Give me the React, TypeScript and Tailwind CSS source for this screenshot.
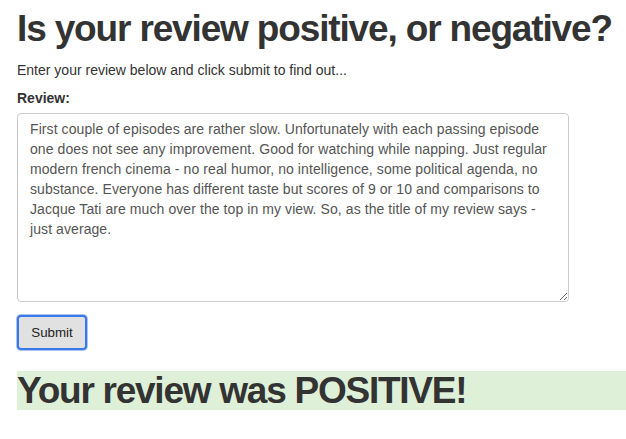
import React from "react";

const review =
  "First couple of episodes are rather slow. Unfortunately with each passing episode one does not see any improvement. Good for watching while napping. Just regular modern french cinema - no real humor, no intelligence, some political agenda, no substance. Everyone has different taste but scores of 9 or 10 and comparisons to Jacque Tati are much over the top in my view. So, as the title of my review says - just average.";

export default function App() {
  return (
    <div className="min-h-[439px] bg-white text-[#333333] font-['Liberation_Sans',Arial,sans-serif] pl-[17px] pt-[9px]">
      <h1 className="text-[37px] leading-[40px] font-bold tracking-[-1.15px] whitespace-nowrap">
        Is your review positive, or negative?
      </h1>
      <p className="mt-[11px] text-[14px] leading-[20px]">
        Enter your review below and click submit to find out...
      </p>
      <label className="block mt-[7px] text-[14px] leading-[20px] font-bold pt-[1px]">
        Review:
      </label>
      <textarea
        className="block mt-[5px] w-[552px] h-[189px] border border-[#cccccc] rounded-[4px] px-[12px] py-[5px] text-[14px] leading-[20px] tracking-[0.08px] text-[#555555] font-['Liberation_Sans',Arial,sans-serif] resize-y outline-none"
        defaultValue={review}
      />
      <button className="block mt-[13px] w-[70px] h-[35px] rounded-[4px] border-2 border-[#3b78e7] bg-[#e1e1e1] text-[13.33px] text-[#222] shadow-[0_0_0_1px_#a9c5f5] font-['Liberation_Sans',Arial,sans-serif]">
        Submit
      </button>
      <div className="mt-[21px] h-[39px] bg-[#dff0d8] text-[37px] leading-[39px] font-bold whitespace-nowrap tracking-[-1.25px]">
        Your review was POSITIVE!
      </div>
    </div>
  );
}
